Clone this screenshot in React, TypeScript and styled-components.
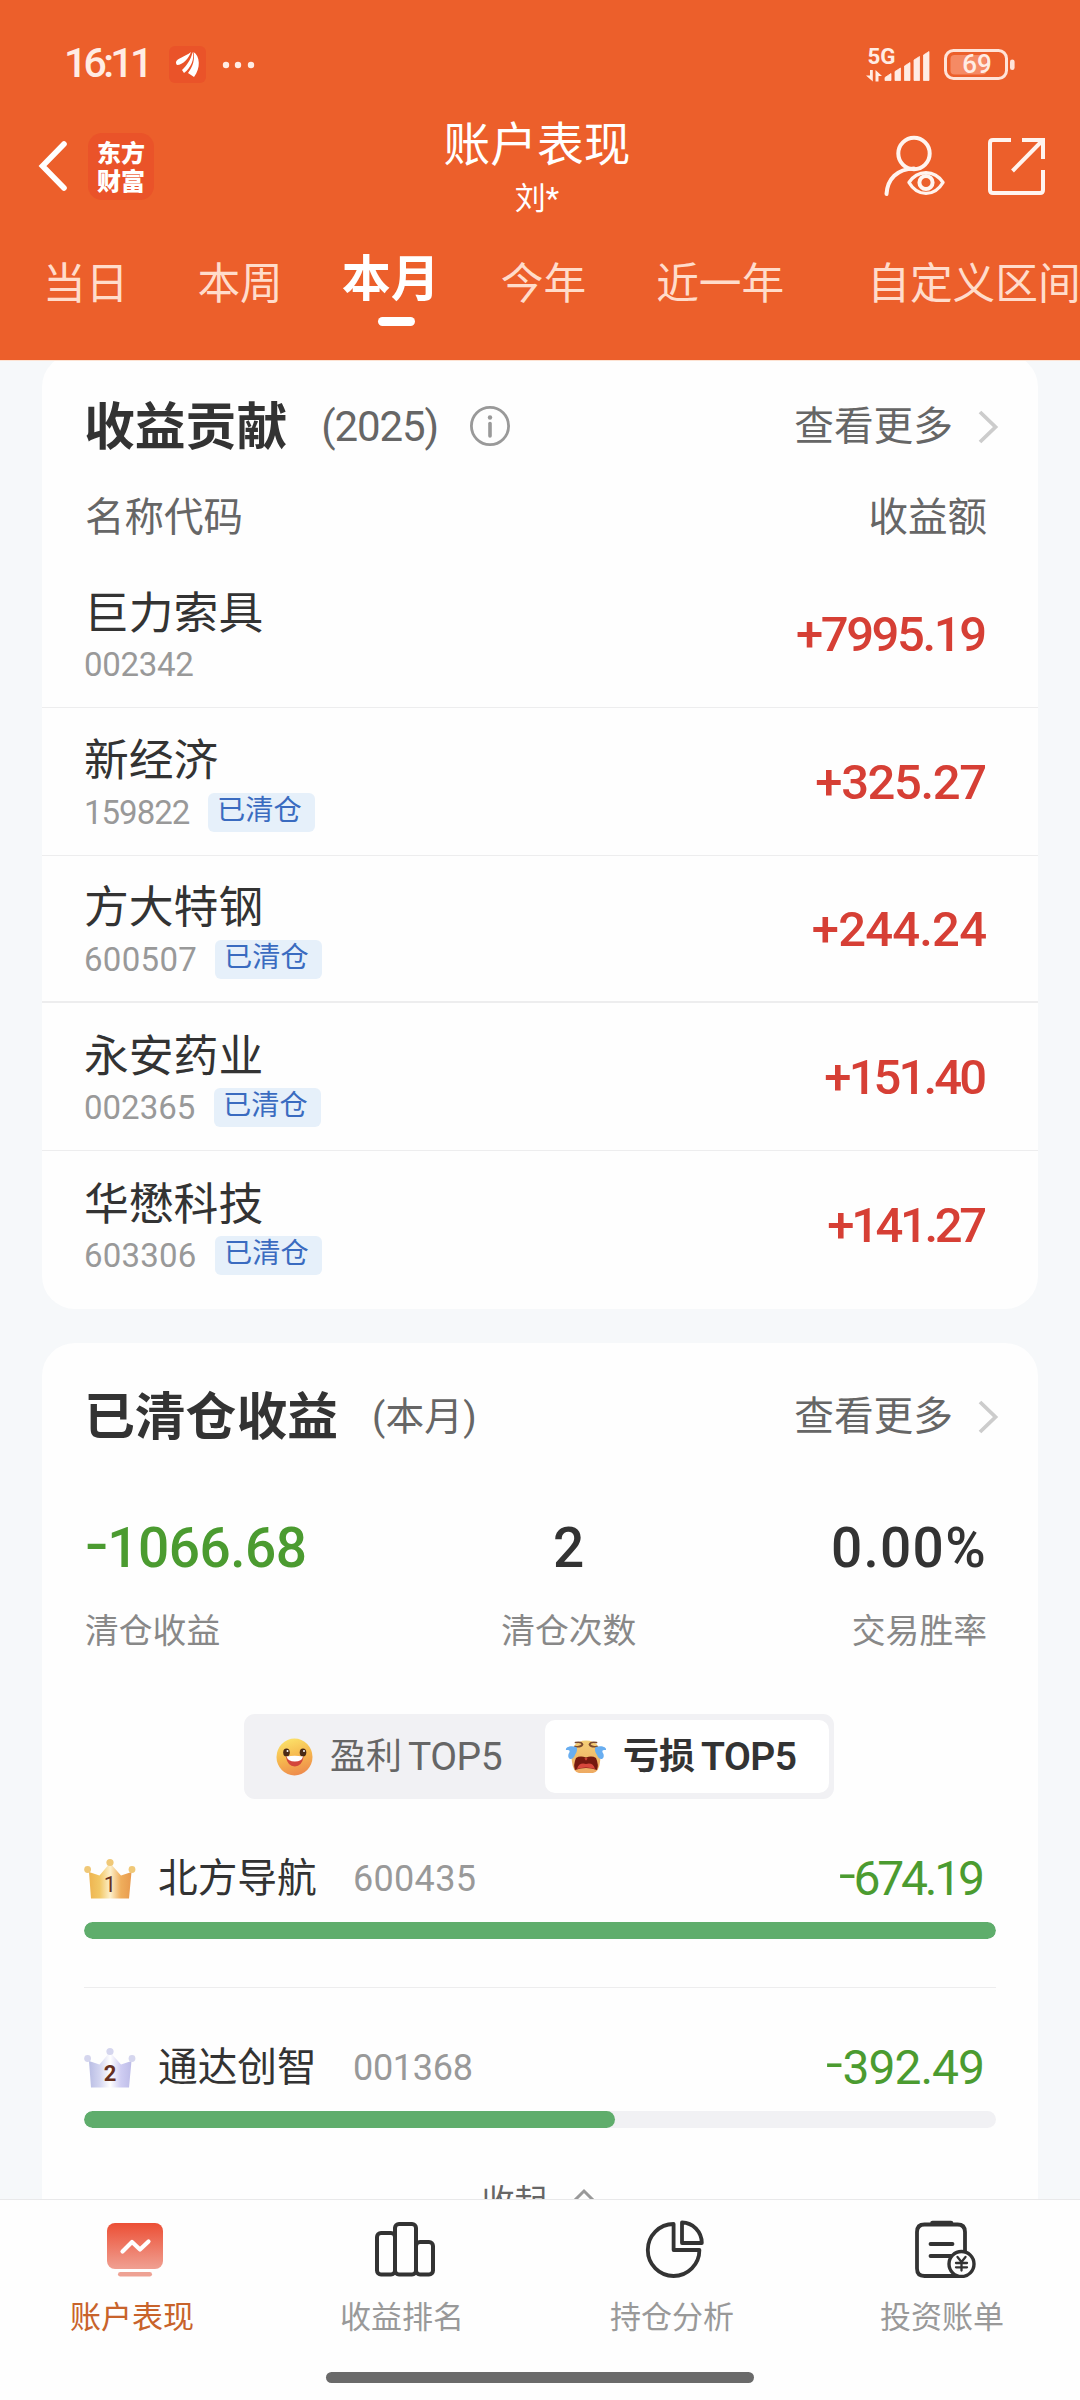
import React from 'react';
import styled, { createGlobalStyle } from 'styled-components';

const GlobalStyle = createGlobalStyle`
  * { box-sizing: border-box; }
  html, body { margin: 0; padding: 0; }
  body {
    font-family: Roboto, "Noto Sans CJK SC", sans-serif;
    color: #333;
    background: #f6f8fa;
  }
`;

const Screen = styled.div`
  width: 1080px;
  height: 2400px;
  display: flex;
  flex-direction: column;
  overflow: hidden;
`;

/* ---------- header ---------- */

const Header = styled.header`
  height: 361px;
  flex: none;
  background: #ec5f2b;
  border-bottom: 1px solid #fde3d3;
  color: #fff;
  overflow: hidden;
`;

const StatusBar = styled.div`
  height: 112px;
  padding: 17px 64px 0 64px;
  display: flex;
  align-items: center;
  justify-content: space-between;
`;

const StatusSide = styled.div<{ $gap?: number }>`
  display: flex;
  align-items: center;
  gap: ${p => p.$gap ?? 0}px;
`;

const Clock = styled.span`
  width: 84px;
  margin: 0 21px 3px 0;
  font-size: 41px;
  line-height: 48px;
  font-weight: 500;
  letter-spacing: -3.7px;
  white-space: nowrap;
  color: #ffece4;
`;

const MoreDots = styled.svg`
  margin-left: 16px;
`;

const NavRow = styled.div`
  height: 108px;
  display: grid;
  grid-template-columns: 400px 1fr 400px;
`;

const NavLeft = styled.div`
  display: flex;
  align-items: center;
  padding-left: 36px;
`;

const BrandTile = styled.div`
  width: 66px;
  height: 67px;
  margin-left: 16px;
  padding-top: 5px;
  border-radius: 14px;
  background: #ea5329;
  font: 900 24px/28px "Noto Sans CJK SC", sans-serif;
  text-align: center;
`;

const NavTitle = styled.div`
  display: flex;
  flex-direction: column;
  align-items: center;
  padding-right: 6px;
`;

const Title = styled.h1`
  margin: 4px 0 0;
  font-size: 46.7px;
  line-height: 58px;
  font-weight: 400;
  white-space: nowrap;
`;

const Subtitle = styled.div`
  margin-top: 4px;
  font-size: 31px;
  line-height: 42px;
`;

const NavRight = styled.div`
  display: flex;
  align-items: center;
  justify-content: flex-end;
  gap: 43px;
  padding-right: 35px;
`;

const Tabs = styled.div`
  height: 140px;
  display: flex;
  padding-left: 43px;
`;

const Tab = styled.div<{ $gap: number; $active?: boolean }>`
  flex: none;
  display: flex;
  flex-direction: column;
  align-items: center;
  margin-left: ${p => p.$gap}px;
  padding-top: ${p => (p.$active ? 30 : 34)}px;
  font-size: ${p => (p.$active ? 49 : 42.7)}px;
  line-height: 60px;
  font-weight: ${p => (p.$active ? 700 : 400)};
  color: ${p => (p.$active ? '#fff' : '#ffdccb')};
  white-space: nowrap;
`;

const TabMark = styled.i`
  width: 37px;
  height: 9px;
  margin: 7px 0 0 12px;
  border-radius: 5px;
  background: #fff;
`;

/* ---------- cards ---------- */

const Main = styled.main`
  flex: 1;
  min-height: 0;
  overflow: hidden;
  padding: 0 42px;
  background: #f6f8fa;
`;

const Card = styled.section<{ $first?: boolean }>`
  background: #fefefe;
  border-radius: 33px;
  height: ${p => (p.$first ? 955 : 1000)}px;
  margin-top: ${p => (p.$first ? -7 : 34)}px;
  padding-top: ${p => (p.$first ? 36 : 37)}px;
`;

const CardHead = styled.div`
  height: 72px;
  display: flex;
  align-items: center;
  padding: 0 38px 0 42px;
`;

const CardTitle = styled.h2`
  margin: 4px 0 0;
  font-size: 50.8px;
  line-height: 72px;
  font-weight: 700;
  white-space: nowrap;
  color: #333;
`;

const CardScope = styled.span<{ $size: number; $track: number }>`
  margin: 1px 0 0 34px;
  font-size: ${p => p.$size}px;
  letter-spacing: ${p => p.$track}px;
  line-height: 60px;
  white-space: nowrap;
  color: #666;
`;

const InfoIcon = styled.svg`
  margin-left: 31px;
`;

const More = styled.a`
  margin: 1px 0 0 auto;
  display: flex;
  align-items: center;
  gap: 23px;
  font-size: 39.7px;
  line-height: 60px;
  color: #666;
`;

const ColumnHead = styled.div`
  display: flex;
  justify-content: space-between;
  height: 98.5px;
  padding: 30.5px 51px 0 43px;
  font-size: 39.5px;
  line-height: 50px;
  color: #666;
`;

const HoldingRow = styled.div<{ $line: number }>`
  height: 147.6px;
  display: flex;
  align-items: center;
  justify-content: space-between;
  padding: 3px 51px 0 42px;
  border-bottom: ${p => p.$line}px solid #ededee;
`;

const HoldingName = styled.div`
  font-size: 44.8px;
  line-height: 60px;
  color: #333;
`;

const HoldingMeta = styled.div`
  height: 43px;
  display: flex;
  align-items: center;
  gap: 19px;
`;

const HoldingCode = styled.span<{ $w: number; $track: number }>`
  width: ${p => p.$w}px;
  font-size: 33px;
  line-height: 40px;
  letter-spacing: ${p => p.$track}px;
  white-space: nowrap;
  color: #999;
`;

const Badge = styled.span`
  width: 107px;
  height: 39px;
  margin-top: -1px;
  padding-left: 9px;
  border-radius: 6px;
  background: #e6f0fa;
  font-size: 28.2px;
  line-height: 36px;
  color: #3a6bc0;
`;

const Gain = styled.span<{ $track: number }>`
  font-size: 49px;
  line-height: 60px;
  font-weight: 500;
  letter-spacing: ${p => p.$track}px;
  margin-right: ${p => -p.$track}px;
  color: #d63f35;
`;

/* ---------- closed positions ---------- */

const Stats = styled.div`
  height: 262px;
  padding: 60.5px 51px 0 43px;
  display: flex;
  justify-content: space-between;
`;

const Stat = styled.div<{ $align: 'left' | 'center' | 'right' }>`
  text-align: ${p => p.$align};
`;

const StatValue = styled.div<{ $loss?: boolean; $track?: number }>`
  font-size: 55px;
  line-height: 70px;
  font-weight: 500;
  letter-spacing: ${p => p.$track ?? 0}px;
  color: ${p => (p.$loss ? '#4b9b30' : '#333')};
`;

const Minus = styled.span`
  display: inline-block;
  margin-right: 4px;
  transform: translateY(-0.08em) scaleX(1.25);
  transform-origin: left center;
`;

const StatLabel = styled.div`
  margin-top: 25px;
  font-size: 33.8px;
  line-height: 48px;
  color: #888;
`;

const Segmented = styled.div`
  width: 590px;
  height: 85px;
  margin-left: 202px;
  padding: 6px 5px 6px 6px;
  display: flex;
  border-radius: 11px;
  background: #f1f1f4;
`;

const Segment = styled.div<{ $active?: boolean }>`
  width: ${p => (p.$active ? 284 : 295)}px;
  height: 73px;
  padding-left: ${p => (p.$active ? 20 : 26)}px;
  display: flex;
  align-items: center;
  border-radius: 10px;
  font-size: 36px;
  line-height: 60px;
  white-space: nowrap;
  font-weight: ${p => (p.$active ? 600 : 400)};
  color: ${p => (p.$active ? '#333' : '#666')};
  background: ${p => (p.$active ? '#fff' : 'transparent')};
  svg { flex: none; margin-right: ${p => (p.$active ? 16 : 17)}px; }
`;

const Latin = styled.span`
  margin: 1px 0 0 6px;
  font-size: 39px;
  letter-spacing: -0.5px;
`;

const RankItem = styled.div<{ $divided?: boolean }>`
  height: 189px;
  margin: 0 42px;
  padding-top: 50px;
  border-bottom: ${p => (p.$divided ? '1px solid #ededee' : '0')};
`;

const RankLine = styled.div`
  height: 60px;
  padding-right: 11px;
  display: flex;
  align-items: center;
`;

const RankName = styled.span`
  width: 194px;
  margin-left: 22px;
  font-size: 39.7px;
  line-height: 60px;
  color: #333;
`;

const RankCode = styled.span<{ $track: number }>`
  margin-left: 1px;
  font-size: 36px;
  line-height: 60px;
  letter-spacing: ${p => p.$track}px;
  color: #999;
`;

const RankLoss = styled.span<{ $track: number }>`
  margin-left: auto;
  font-size: 48px;
  line-height: 60px;
  letter-spacing: ${p => p.$track}px;
  margin-right: ${p => -p.$track}px;
  color: #4b9b30;
`;

const Track = styled.div`
  height: 17px;
  margin-top: 13px;
  border-radius: 9px;
  background: #f1f1f4;
  overflow: hidden;
`;

const Fill = styled.div`
  height: 17px;
  border-radius: 9px;
  background: #5fad6c;
`;

const Collapse = styled.div`
  display: flex;
  justify-content: center;
  gap: 24px;
  padding-right: 3px;
  font-size: 33px;
  line-height: 49px;
  color: #666;
  svg { margin-top: 11px; }
`;

/* ---------- bottom navigation ---------- */

const BottomNav = styled.nav`
  height: 201px;
  flex: none;
  display: flex;
  flex-direction: column;
  align-items: center;
  background: #fefefe;
  border-top: 1px solid #e9e9ea;
`;

const NavItems = styled.div`
  height: 172px;
  width: 1080px;
  display: grid;
  grid-template-columns: repeat(4, 270px);
`;

const NavItem = styled.div`
  display: flex;
  flex-direction: column;
  align-items: center;
  padding-top: 18px;
`;

const NavLabel = styled.span<{ $active?: boolean }>`
  margin-top: 18px;
  padding-right: 6px;
  font-size: 31px;
  line-height: 44px;
  color: ${p => (p.$active ? '#c8632b' : '#999')};
`;

const HomeBar = styled.div`
  width: 428px;
  height: 11px;
  border-radius: 6px;
  background: #6a6a6a;
`;

/* ---------- drawings ---------- */

const AppGlyph = () => (
  <svg width="37" height="37" viewBox="0 0 37 37">
    <rect width="37" height="37" rx="6" fill="#ea5329" />
    <g fill="#fff">
      <path d="M7 16C8 12 16 11 22 6C20 12 14 19 8 19C7 18 7 17 7 16Z" />
      <path d="M13 24C17 20 22 14 23.500 6C26 12 22 22 15 27Z" />
      <path d="M19 27C24 20 26 14 24.500 6C31 10 32 22 25 31Z" />
    </g>
  </svg>
);

const Dots = () => (
  <MoreDots width="34" height="8" viewBox="0 0 34 8" fill="#ffece4">
    <circle cx="4" cy="4" r="3.200" />
    <circle cx="16" cy="4" r="3.200" />
    <circle cx="29" cy="4" r="3.200" />
  </MoreDots>
);

const Signal = () => (
  <svg width="66" height="36" viewBox="0 0 66 36" fill="#ffece4">
    <text x="1.500" y="16.500" fontSize="22" fontWeight="700" fontFamily="Roboto, sans-serif" textLength="28" lengthAdjust="spacingAndGlyphs">5G</text>
    <path d="M4 23h2.800v11.500L0 28.500h4ZM9.500 34.500V23l6.500 6h-3.500v5.500Z" />
    <path d="M19 33.500V30.500l6-4V33.500ZM29 33.500V24.500l5.500-3.500V33.500ZM38.500 33.500V19l5.500-3.500V33.500ZM48 33.500V13l5.500-3.500V33.500ZM57.500 33.500V8l5.500-3.500V33.500Z" stroke="#ffece4" strokeWidth="0.800" strokeLinejoin="round" />
  </svg>
);

const Battery = () => (
  <svg width="72" height="32" viewBox="0 0 72 32">
    <rect x="1.500" y="1.500" width="61" height="28" rx="8" fill="none" stroke="#ffe3d8" strokeWidth="3" />
    <rect x="6.500" y="6" width="36" height="19.500" rx="4" fill="#f58a64" />
    <rect x="66" y="10.500" width="4.600" height="10.500" rx="2.300" fill="#ffe3d8" />
    <text x="33" y="24.400" textAnchor="middle" fontSize="26" fontWeight="500" fill="#ffece4" fontFamily="Roboto, sans-serif">69</text>
  </svg>
);

const BackIcon = () => (
  <svg width="36" height="56" viewBox="0 0 36 56">
    <path d="M28 6L6.500 28L28 50" fill="none" stroke="#fff" strokeWidth="5.600" strokeLinecap="round" strokeLinejoin="miter" />
  </svg>
);

const UserEyeIcon = () => (
  <svg width="62" height="62" viewBox="0 0 62 62" fill="none" stroke="#fff4ef" strokeWidth="4" strokeLinecap="round">
    <circle cx="31" cy="18.500" r="15.700" />
    <path d="M3.500 59C4.500 44 14 34 31 33.500" />
    <path d="M26 47.500C34.500 34.500 51.500 34.500 60 47.500C51.500 62 34.500 62 26 47.500Z" strokeWidth="3.400" strokeLinejoin="round" />
    <circle cx="43" cy="47.500" r="6.600" />
  </svg>
);

const ShareIcon = () => (
  <svg width="57" height="58" viewBox="0 0 57 58" fill="none" stroke="#fff4ef" strokeWidth="4">
    <path d="M23 3H5Q2 3 2 6V53Q2 56 5 56H52Q55 56 55 53V33" />
    <path d="M34 3H55V22M54 4L24.500 34" />
  </svg>
);

const ChevronRight = () => (
  <svg width="24" height="36" viewBox="0 0 24 36">
    <path d="M4 3L19.500 18L4 33" fill="none" stroke="#ccc" strokeWidth="3.800" />
  </svg>
);

const HappyFace = () => (
  <svg width="37" height="38" viewBox="0 0 37 38">
    <defs>
      <linearGradient id="happy" x1="0.300" y1="0" x2="0.600" y2="1">
        <stop offset="0" stopColor="#fbe26a" />
        <stop offset="0.500" stopColor="#f6b84e" />
        <stop offset="1" stopColor="#ee8a4c" />
      </linearGradient>
    </defs>
    <ellipse cx="18.500" cy="19" rx="18" ry="18.400" fill="url(#happy)" />
    <ellipse cx="10.500" cy="14.500" rx="3.300" ry="4" fill="#4a2a16" />
    <ellipse cx="27" cy="14.500" rx="3.300" ry="4" fill="#4a2a16" />
    <circle cx="11.500" cy="13" r="1" fill="#fff" />
    <circle cx="28" cy="13" r="1" fill="#fff" />
    <path d="M10 19Q18.500 17 27.500 19Q26 28 18.800 28.500Q11.500 28 10 19Z" fill="#d3453a" />
    <path d="M10.500 18.500Q18.500 17 27 18.500Q26 23.500 18.800 23.500Q12 23.500 10.500 18.500Z" fill="#fff" />
  </svg>
);

const CryingFace = () => (
  <svg width="42" height="34" viewBox="0 0 42 34">
    <defs>
      <linearGradient id="crying" x1="0" y1="0" x2="0" y2="1">
        <stop offset="0" stopColor="#f4cf77" />
        <stop offset="1" stopColor="#eeaa62" />
      </linearGradient>
    </defs>
    <path d="M9 6Q13 0.500 21 0.500Q29 0.500 33 6Q37 12 35 22Q34 32 28 33H14Q8 32 7 22Q5 12 9 6Z" fill="url(#crying)" />
    <path d="M10.500 2.500Q17 1.500 17.500 4.500Q16 7.500 10 6.500M31.500 2.500Q25 1.500 24.500 4.500Q26 7.500 32 6.500" fill="none" stroke="#7b4a2e" strokeWidth="1.700" strokeLinecap="round" />
    <path d="M11 7C6 5 0 7 1 10C4 10 6 10 3.500 14C2 20 8 21 10 15C12 12 13 8 11 7ZM31 7C36 5 42 7 41 10C38 10 36 10 38.500 14C40 20 34 21 32 15C30 12 29 8 31 7Z" fill="#69aef0" />
    <path d="M11 18Q15 15.500 21 17.500Q27 15.500 31 18Q34 25 32 30Q21 26 10 30Q8 25 11 18Z" fill="#75190f" />
    <path d="M12 29Q14 22 21 24Q28 22 30 29Q21 26 12 29Z" fill="#d8483c" />
    <path d="M19.500 18q1.500 5 3 0Z" fill="#c84034" />
  </svg>
);

type CrownTone = { id: string; stops: string[]; knob: string };

const Crown = ({ tone, n, bold }: { tone: CrownTone; n: number; bold?: boolean }) => (
  <svg width="52" height="42" viewBox="0 0 52 42">
    <defs>
      <linearGradient id={tone.id} x1="0" x2="1">
        {tone.stops.map((c, i) => (
          <stop key={i} offset={i / (tone.stops.length - 1)} stopColor={c} />
        ))}
      </linearGradient>
    </defs>
    <path d="M5 14L15.500 17.500L26 5L37 17.500L47.500 14L45 40.500H7Z" fill={`url(#${tone.id})`} />
    <circle cx="3.600" cy="11.500" r="3.400" fill={tone.knob} />
    <circle cx="26" cy="4.500" r="3.600" fill={tone.knob} />
    <circle cx="48" cy="11.500" r="3.400" fill={tone.knob} />
    <text x="26" y="34" textAnchor="middle" fontFamily="Roboto, sans-serif" fontSize="22" fontWeight={bold ? 700 : 400} fill="#66301f">{n}</text>
  </svg>
);

const PerformanceIcon = () => (
  <svg width="60" height="60" viewBox="0 0 60 60">
    <defs>
      <linearGradient id="perf" x1="0" y1="0" x2="0" y2="1">
        <stop offset="0" stopColor="#ec4f35" />
        <stop offset="1" stopColor="#f0a092" />
      </linearGradient>
    </defs>
    <rect x="2" y="5" width="56" height="46" rx="8" fill="url(#perf)" />
    <path d="M17.500 33.500L27 24L35 31.500L43.500 23.500" fill="none" stroke="#fff" strokeWidth="4.200" strokeLinecap="round" strokeLinejoin="round" />
    <rect x="13" y="54" width="34" height="4.600" rx="2.300" fill="#eea294" />
  </svg>
);

const RankingIcon = () => (
  <svg width="60" height="60" viewBox="0 0 60 60" fill="none" stroke="#333" strokeWidth="4">
    <rect x="2" y="15" width="18" height="41.500" rx="4" />
    <rect x="20" y="6" width="21" height="50.500" rx="4" />
    <rect x="41" y="24" width="17" height="32.500" rx="4" />
  </svg>
);

const PieIcon = () => (
  <svg width="60" height="60" viewBox="0 0 60 60" fill="none" stroke="#333" strokeWidth="3.800" strokeLinejoin="round">
    <path d="M28.600 6A25.800 26 0 1 0 54.400 32H28.600Z" />
    <path d="M37 4.500V25H56.800A20 20.500 0 0 0 37 4.500Z" />
  </svg>
);

const BillIcon = () => (
  <svg width="62" height="60" viewBox="0 0 62 60" fill="none" stroke="#333" strokeWidth="3.800" strokeLinecap="round">
    <path d="M51 34V14Q51 6.500 43.500 6.500H10.500Q3 6.500 3 14V50.500Q3 58 10.500 58H46" />
    <path d="M18.500 5H37" strokeWidth="4.600" />
    <path d="M16.500 26H38.500M16.500 38H37" />
    <circle cx="47.500" cy="46" r="12.500" fill="#fefefe" strokeWidth="3.400" />
    <path d="M43.500 39L47.500 44L51.500 39M47.500 44.500V52.500M42 45H53M42 49.300H53" strokeWidth="2.300" />
  </svg>
);

/* ---------- data ---------- */

const tabs = [
  { label: '当日', gap: 0 },
  { label: '本周', gap: 69 },
  { label: '本月', gap: 59, active: true },
  { label: '今年', gap: 61 },
  { label: '近一年', gap: 70 },
  { label: '自定义区间', gap: 83 },
];

const holdings = [
  { name: '巨力索具', code: '002342', cw: 111, ct: -0.3, gain: '+7995.19', track: -2.4, line: 1 },
  { name: '新经济', code: '159822', cw: 105, ct: -1, gain: '+325.27', track: -1.4, closed: true, line: 1 },
  { name: '方大特钢', code: '600507', cw: 112, ct: 0.3, gain: '+244.24', track: -0.8, closed: true, line: 2 },
  { name: '永安药业', code: '002365', cw: 111, ct: 0, gain: '+151.40', track: -2.9, closed: true, line: 1 },
  { name: '华懋科技', code: '603306', cw: 112, ct: 0.2, gain: '+141.27', track: -3.4, closed: true, line: 0 },
];

const gold: CrownTone = { id: 'gold', stops: ['#eeb450', '#f2c765', '#fdf0cb', '#efae5c', '#e89a4e'], knob: '#f0c877' };
const silver: CrownTone = { id: 'silver', stops: ['#b9bde4', '#d3d5f0', '#ffffff', '#cfcdf2', '#bdbce8'], knob: '#d5d6ee' };

const losses = [
  { name: '北方导航', code: '600435', ct: 0.3, loss: '674.19', track: -3.2, share: 100, tone: gold },
  { name: '通达创智', code: '001368', ct: -0.3, loss: '392.49', track: -1, share: 58.2, tone: silver },
];

const navItems = [
  { label: '账户表现', Icon: PerformanceIcon, active: true },
  { label: '收益排名', Icon: RankingIcon },
  { label: '持仓分析', Icon: PieIcon },
  { label: '投资账单', Icon: BillIcon },
];

export default function App() {
  return (
    <Screen>
      <GlobalStyle />
      <Header>
        <StatusBar>
          <StatusSide>
            <Clock>16:11</Clock>
            <AppGlyph />
            <Dots />
          </StatusSide>
          <StatusSide $gap={12}>
            <Signal />
            <Battery />
          </StatusSide>
        </StatusBar>
        <NavRow>
          <NavLeft>
            <BackIcon />
            <BrandTile>东方<br />财富</BrandTile>
          </NavLeft>
          <NavTitle>
            <Title>账户表现</Title>
            <Subtitle>刘*</Subtitle>
          </NavTitle>
          <NavRight>
            <UserEyeIcon />
            <ShareIcon />
          </NavRight>
        </NavRow>
        <Tabs>
          {tabs.map(t => (
            <Tab key={t.label} $gap={t.gap} $active={t.active}>
              {t.label}
              {t.active && <TabMark />}
            </Tab>
          ))}
        </Tabs>
      </Header>

      <Main>
        <Card $first>
          <CardHead>
            <CardTitle>收益贡献</CardTitle>
            <CardScope $size={42} $track={-1.1}>(2025)</CardScope>
            <InfoIcon width="42" height="42" viewBox="0 0 42 42" fill="none" stroke="#999">
              <circle cx="21" cy="21" r="18.600" strokeWidth="2.800" />
              <path d="M21 18.500V31" strokeWidth="3.600" strokeLinecap="round" />
              <circle cx="21" cy="12.500" r="2.200" fill="#999" stroke="none" />
            </InfoIcon>
            <More>查看更多<ChevronRight /></More>
          </CardHead>
          <ColumnHead>
            <span>名称代码</span>
            <span>收益额</span>
          </ColumnHead>
          {holdings.map(h => (
            <HoldingRow key={h.code} $line={h.line}>
              <div>
                <HoldingName>{h.name}</HoldingName>
                <HoldingMeta>
                  <HoldingCode $w={h.cw} $track={h.ct}>{h.code}</HoldingCode>
                  {h.closed && <Badge>已清仓</Badge>}
                </HoldingMeta>
              </div>
              <Gain $track={h.track}>{h.gain}</Gain>
            </HoldingRow>
          ))}
        </Card>

        <Card>
          <CardHead>
            <CardTitle>已清仓收益</CardTitle>
            <CardScope $size={38.7} $track={0.2}>(本月)</CardScope>
            <More>查看更多<ChevronRight /></More>
          </CardHead>
          <Stats>
            <Stat $align="left">
              <StatValue $loss $track={-0.5}><Minus>-</Minus>1066.68</StatValue>
              <StatLabel>清仓收益</StatLabel>
            </Stat>
            <Stat $align="center">
              <StatValue>2</StatValue>
              <StatLabel>清仓次数</StatLabel>
            </Stat>
            <Stat $align="right">
              <StatValue $track={1.3}>0.00%</StatValue>
              <StatLabel>交易胜率</StatLabel>
            </Stat>
          </Stats>
          <Segmented>
            <Segment><HappyFace />盈利<Latin>TOP5</Latin></Segment>
            <Segment $active><CryingFace />亏损<Latin>TOP5</Latin></Segment>
          </Segmented>
          {losses.map((l, i) => (
            <RankItem key={l.code} $divided={i === 0}>
              <RankLine>
                <Crown tone={l.tone} n={i + 1} bold={i === 1} />
                <RankName>{l.name}</RankName>
                <RankCode $track={l.ct}>{l.code}</RankCode>
                <RankLoss $track={l.track}><Minus>-</Minus>{l.loss}</RankLoss>
              </RankLine>
              <Track>
                <Fill style={{ width: `${l.share}%` }} />
              </Track>
            </RankItem>
          ))}
          <Collapse>
            收起
            <svg width="24" height="16" viewBox="0 0 24 16">
              <path d="M2 13L12 3L22 13" fill="none" stroke="#999" strokeWidth="3" />
            </svg>
          </Collapse>
        </Card>
      </Main>

      <BottomNav>
        <NavItems>
          {navItems.map(({ label, Icon, active }) => (
            <NavItem key={label}>
              <Icon />
              <NavLabel $active={active}>{label}</NavLabel>
            </NavItem>
          ))}
        </NavItems>
        <HomeBar />
      </BottomNav>
    </Screen>
  );
}
